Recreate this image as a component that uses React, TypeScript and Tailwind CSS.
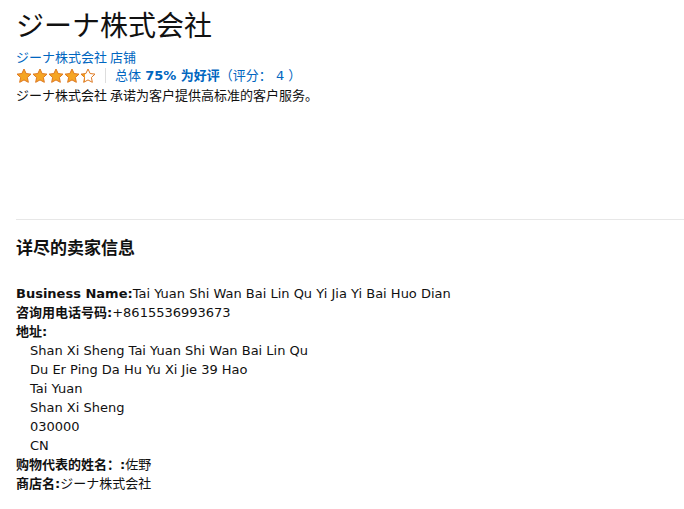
import React from "react";

const Star = ({ fill = 1, id }: { fill?: number; id: string }) => (
  <svg width="16" height="16" viewBox="0 0 24 24" className="block">
    <defs>
      <linearGradient id={id} x1="0" x2="1" y1="0" y2="0">
        <stop offset={fill} stopColor="#f5a524" />
        <stop offset={fill} stopColor="#ffffff" />
      </linearGradient>
    </defs>
    <path
      d="M12 1.5l3.2 6.8 7.3.9-5.4 5 1.4 7.3L12 17.9l-6.5 3.6 1.4-7.3-5.4-5 7.3-.9z"
      fill={`url(#${id})`}
      stroke="#de7921"
      strokeWidth="1.5"
      strokeLinejoin="round"
    />
  </svg>
);

export default function App() {
  const font = { fontFamily: '"DejaVu Sans", Verdana, "Noto Sans CJK SC", sans-serif' };
  return (
    <div className="w-[684px] h-[509px] bg-white text-[#111] overflow-hidden" style={font}>
      <div className="pl-4">
        <h1 className="text-[28px] leading-[36px] pt-[6px] text-[#111] font-normal" style={{ fontFamily: '"Noto Sans CJK SC", sans-serif' }}>
          ジーナ株式会社
        </h1>
        <div className="mt-[5px] text-[13px] leading-[19px] text-[#0066c0]" style={{ fontFamily: '"Noto Sans CJK SC", sans-serif' }}>
          ジーナ株式会社 店铺
        </div>
        <div className="flex items-center h-[19px]">
          <div className="flex gap-0">
            <Star id="s1" />
            <Star id="s2" />
            <Star id="s3" />
            <Star id="s4" />
            <Star id="s5" fill={0.3} />
          </div>
          <div className="w-px h-[15px] bg-[#ddd] ml-[9px] mr-[9px]" />
          <div className="text-[13px] text-[#0066c0]">
            总体 <span className="font-bold">75% 为好评</span>（评分： 4 ）
          </div>
        </div>
        <div className="text-[13px] leading-[19px]" style={{ fontFamily: '"Noto Sans CJK SC", sans-serif' }}>
          ジーナ株式会社 承诺为客户提供高标准的客户服务。
        </div>
      </div>
      <div className="ml-4 mt-[115px] border-t border-[#e7e7e7]" />
      <div className="pl-4">
        <h2 className="mt-[16px] text-[17px] leading-[24px] font-bold">详尽的卖家信息</h2>
        <div className="mt-[24px] text-[13px] leading-[19px]">
          <div><span className="font-bold">Business Name:</span>Tai Yuan Shi Wan Bai Lin Qu Yi Jia Yi Bai Huo Dian</div>
          <div><span className="font-bold">咨询用电话号码:</span>+8615536993673</div>
          <div><span className="font-bold">地址:</span></div>
          <div className="pl-[14px]">
            <div>Shan Xi Sheng Tai Yuan Shi Wan Bai Lin Qu</div>
            <div>Du Er Ping Da Hu Yu Xi Jie 39 Hao</div>
            <div>Tai Yuan</div>
            <div>Shan Xi Sheng</div>
            <div>030000</div>
            <div>CN</div>
          </div>
          <div><span className="font-bold">购物代表的姓名：:</span>佐野</div>
          <div><span className="font-bold">商店名:</span>ジーナ株式会社</div>
        </div>
      </div>
    </div>
  );
}
